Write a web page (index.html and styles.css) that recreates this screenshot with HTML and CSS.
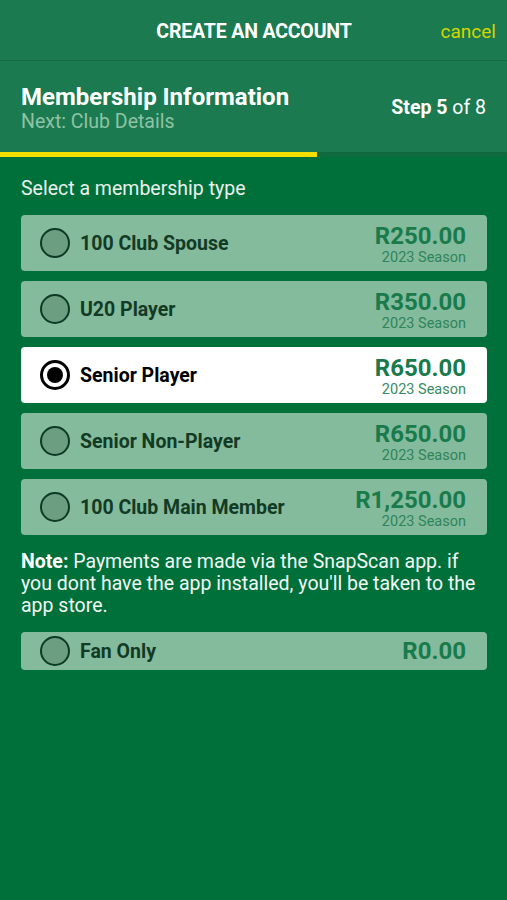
FILE: index.html
```html
<!DOCTYPE html>
<html lang="en">
<head>
  <meta charset="UTF-8" />
  <meta name="viewport" content="width=device-width, initial-scale=1.0" />
  <title>Create an Account</title>
  <link rel="stylesheet" href="styles.css">
</head>
<body>

  <header class="topbar">
    <span></span>
    <h1 class="topbar-title">CREATE AN ACCOUNT</h1>
    <a class="cancel" href="#">cancel</a>
  </header>

  <div class="step-head">
    <div class="step-info">
      <h2>Membership Information</h2>
      <div class="next">Next: Club Details</div>
    </div>
    <div class="step-count"><b>Step 5</b> of 8</div>
  </div>
  <div class="progress"><div class="progress-fill" style="width: 62.5%"></div></div>

  <main class="content">
    <p class="prompt">Select a membership type</p>

    <div class="options">
      <label class="option">
        <span class="radio"></span>
        <span class="name">100 Club Spouse</span>
        <span class="price"><strong>R250.00</strong><small>2023 Season</small></span>
      </label>
      <label class="option">
        <span class="radio"></span>
        <span class="name">U20 Player</span>
        <span class="price"><strong>R350.00</strong><small>2023 Season</small></span>
      </label>
      <label class="option selected">
        <span class="radio"></span>
        <span class="name">Senior Player</span>
        <span class="price"><strong>R650.00</strong><small>2023 Season</small></span>
      </label>
      <label class="option">
        <span class="radio"></span>
        <span class="name">Senior Non-Player</span>
        <span class="price"><strong>R650.00</strong><small>2023 Season</small></span>
      </label>
      <label class="option">
        <span class="radio"></span>
        <span class="name">100 Club Main Member</span>
        <span class="price"><strong>R1,250.00</strong><small>2023 Season</small></span>
      </label>
    </div>

    <p class="note"><b>Note:</b> Payments are made via the SnapScan app. if you dont have the app installed, you'll be taken to the app store.</p>

    <label class="option short">
      <span class="radio"></span>
      <span class="name">Fan Only</span>
      <span class="price"><strong>R0.00</strong></span>
    </label>
  </main>

</body>
</html>
```

FILE: styles.css
```css
body {
  margin: 0;
  font-family: Roboto, 'Liberation Sans', sans-serif;
  background-color: #00703b;
  color: #ffffff;
  min-height: 900px;
}

.topbar {
  height: 60px;
  background-color: #1b7a50;
  border-bottom: 1px solid #146a43;
  display: grid;
  grid-template-columns: 1fr auto 1fr;
  align-items: center;
}

.topbar-title {
  margin: 0;
  font-size: 21px;
  font-weight: 700;
  letter-spacing: -0.2px;
  transform: scaleX(0.93);
  padding-top: 1px;
}

.cancel {
  justify-self: end;
  margin-right: 11px;
  color: #d3d600;
  text-decoration: none;
  font-size: 19px;
  padding-top: 2px;
}

.step-head {
  background-color: #1b7a50;
  height: 91px;
  box-sizing: border-box;
  padding: 22px 21px 0 21px;
  display: flex;
  justify-content: space-between;
}

.step-info h2 {
  margin: 0;
  font-size: 24px;
  font-weight: 700;
  line-height: 28px;
}

.next {
  font-size: 19.5px;
  line-height: 22px;
  color: #8fc3a5;
}

.step-count {
  font-size: 19.5px;
  margin-top: 13px;
}

.step-count b {
  font-weight: 700;
}

.progress {
  height: 5px;
  background-color: #0f6a40;
}

.progress-fill {
  height: 100%;
  background-color: #f4de00;
}

.content {
  padding: 0 20px 0 21px;
}

.prompt {
  margin: 0;
  padding-top: 21px;
  font-size: 19.5px;
  line-height: 22px;
  color: #e9f1ec;
}

.options {
  margin-top: 15px;
  display: flex;
  flex-direction: column;
  gap: 10px;
}

.option {
  height: 56px;
  box-sizing: border-box;
  border-radius: 4px;
  background-color: #84bb9c;
  display: flex;
  align-items: center;
  padding: 0 21px 0 19px;
}

.option.selected {
  background-color: #ffffff;
}

.radio {
  width: 30px;
  height: 30px;
  box-sizing: border-box;
  border-radius: 50%;
  border: 2.5px solid #0d3a24;
  background-color: #6c9e82;
  flex-shrink: 0;
  position: relative;
}

.selected .radio {
  border: 3px solid #000000;
  background-color: #ffffff;
}

.selected .radio::after {
  content: '';
  position: absolute;
  left: 4px;
  top: 4px;
  width: 16px;
  height: 16px;
  border-radius: 50%;
  background-color: #000000;
}

.name {
  margin-left: 10px;
  flex: 1;
  font-size: 19.5px;
  font-weight: 700;
  color: #123a25;
}

.selected .name {
  color: #000000;
}

.price {
  display: flex;
  flex-direction: column;
  align-items: flex-end;
  color: #197a4b;
  padding-top: 3px;
}

.price strong {
  font-size: 24px;
  line-height: 26px;
  font-weight: 700;
}

.price small {
  font-size: 14.5px;
  line-height: 17px;
  color: #2f845a;
}

.selected .price small {
  color: #3a8a62;
}

.note {
  margin: 16px 0 0 0;
  font-size: 19.5px;
  line-height: 22px;
  color: #f2f7f4;
}

.note b {
  font-weight: 700;
  color: #ffffff;
}

.option.short {
  height: 38px;
  margin-top: 15px;
}

.option.short .price {
  padding-top: 0;
}
```
